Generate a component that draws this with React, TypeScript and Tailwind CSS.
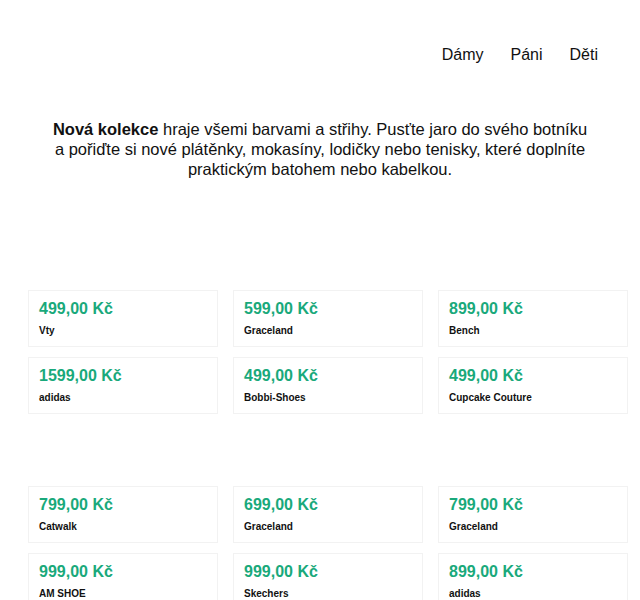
import React from 'react';

type Product = {
  price: string;
  brand: string;
};

const groups: Product[][] = [
  [
    { price: '499,00 Kč', brand: 'Vty' },
    { price: '599,00 Kč', brand: 'Graceland' },
    { price: '899,00 Kč', brand: 'Bench' },
    { price: '1599,00 Kč', brand: 'adidas' },
    { price: '499,00 Kč', brand: 'Bobbi-Shoes' },
    { price: '499,00 Kč', brand: 'Cupcake Couture' },
  ],
  [
    { price: '799,00 Kč', brand: 'Catwalk' },
    { price: '699,00 Kč', brand: 'Graceland' },
    { price: '799,00 Kč', brand: 'Graceland' },
    { price: '999,00 Kč', brand: 'AM SHOE' },
    { price: '999,00 Kč', brand: 'Skechers' },
    { price: '899,00 Kč', brand: 'adidas' },
  ],
];

function ProductCard({ price, brand }: Product) {
  return (
    <div className="h-[57px] border border-[#f2f2f2] bg-white px-[10px] pt-[8px]">
      <div className="text-[16px] font-bold leading-[20px] text-[#19a97b]">{price}</div>
      <div className="mt-[5px] text-[10px] font-bold leading-[14px] text-[#111]">{brand}</div>
    </div>
  );
}

export default function App() {
  return (
    <div className="h-[600px] overflow-hidden bg-white font-['Liberation_Sans',Arial,sans-serif] text-[#111]">
      <nav className="flex justify-end gap-[27px] pr-[42px] pt-[45px] text-[16px] leading-[20px]">
        <a href="#">Dámy</a>
        <a href="#">Páni</a>
        <a href="#">Děti</a>
      </nav>

      <p className="mx-auto mt-[54px] w-[542px] text-center text-[16.5px] leading-[20px]">
        <b>Nová kolekce</b> hraje všemi barvami a střihy. Pusťte jaro do svého botníku a pořiďte si
        nové plátěnky, mokasíny, lodičky nebo tenisky, které doplníte praktickým batohem nebo
        kabelkou.
      </p>

      <div className="ml-[28px] mt-[111px] flex w-[600px] flex-col gap-[72px]">
        {groups.map((items, i) => (
          <div key={i} className="grid grid-cols-3 gap-x-[15px] gap-y-[10px]">
            {items.map((p, j) => (
              <ProductCard key={j} {...p} />
            ))}
          </div>
        ))}
      </div>
    </div>
  );
}
